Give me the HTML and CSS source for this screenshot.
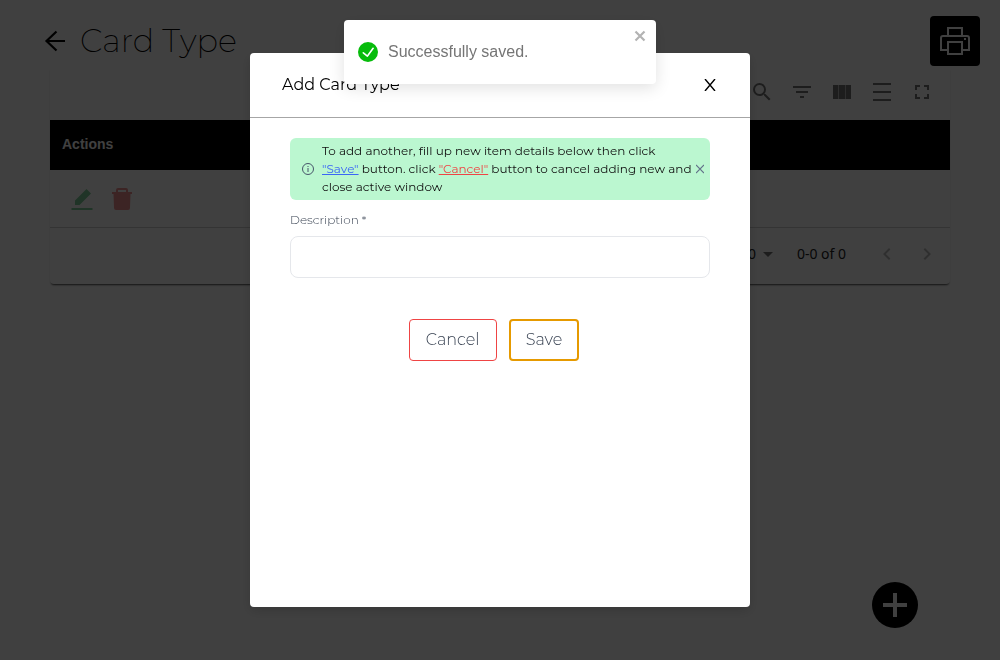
FILE: index.html
```html
<!DOCTYPE html>
<html lang="en">
<head>
<meta charset="utf-8">
<meta name="viewport" content="width=device-width, initial-scale=1">
<title>Card Type</title>
<link rel="stylesheet" href="styles.css">
</head>
<body>
<header class="page-header">
  <button class="icon-btn back-btn" type="button" aria-label="Back">
    <svg width="22" height="22" viewBox="0 0 22 22" fill="none" stroke="currentColor" stroke-width="2.200"><path d="M21 11H2.500M12.500 1.500L2.500 11l10 9.500"/></svg>
  </button>
  <h1 class="page-title">Card Type</h1>
  <button class="icon-btn print-btn" type="button" aria-label="Print">
    <svg width="30" height="30" viewBox="0 0 30 30" fill="none" stroke="currentColor" stroke-width="2"><path d="M8 10V2h14v8M8 24H1V12a2 2 0 0 1 2-2h24a2 2 0 0 1 2 2v12h-7M8 16h14v12H8z"/><path d="M24 13h2" /></svg>
  </button>
</header>

<main class="card">
  <div class="toolbar">
    <button class="icon-btn tool-btn" type="button" aria-label="Search"><svg viewBox="0 0 24 24"><path d="M15.500 14h-.79l-.28-.27A6.471 6.471 0 0 0 16 9.500 6.500 6.500 0 1 0 9.500 16c1.610 0 3.090-.59 4.230-1.570l.27.28v.79l5 4.990L20.490 19l-4.990-5zm-6 0C7.010 14 5 11.990 5 9.500S7.010 5 9.500 5 14 7.010 14 9.500 11.990 14 9.500 14z"/></svg></button>
    <button class="icon-btn tool-btn" type="button" aria-label="Filters"><svg viewBox="0 0 24 24"><path d="M10 18h4v-2h-4v2zM3 6v2h18V6H3zm3 7h12v-2H6v2z"/></svg></button>
    <button class="icon-btn tool-btn" type="button" aria-label="Columns"><svg viewBox="0 0 24 24"><path d="M3 5h5.500v14H3zM9 5h6v14H9zM15.500 5H21v14h-5.500z"/></svg></button>
    <button class="icon-btn tool-btn" type="button" aria-label="Density"><svg viewBox="0 0 24 24"><path d="M3 3h18v2H3zM3 11h18v2H3zM3 19h18v2H3z"/></svg></button>
    <button class="icon-btn tool-btn" type="button" aria-label="Full screen"><svg viewBox="0 0 24 24"><path d="M7 14H5v5h5v-2H7v-3zm-2-4h2V7h3V5H5v5zm12 7h-3v2h5v-5h-2v3zM14 5v2h3v3h2V5h-5z"/></svg></button>
  </div>
  <table class="table">
    <thead><tr><th scope="col">Actions</th></tr></thead>
    <tbody><tr><td>
      <div class="row-actions">
        <button class="icon-btn row-btn edit" type="button" aria-label="Edit"><svg viewBox="0 0 22 22"><path d="M4 12.500L15.500 1 20 5.500 8.500 17H4zM.5 20h21v2H.5z"/></svg></button>
        <button class="icon-btn row-btn delete" type="button" aria-label="Delete"><svg viewBox="0 0 22 22"><path fill-rule="evenodd" d="M5 4V2a2 2 0 0 1 2-2h8a2 2 0 0 1 2 2v2h4v2h-1.500L19 20a2 2 0 0 1-2 2H5a2 2 0 0 1-2-2L2.500 6H1V4zM7 4h8V2H7z"/></svg></button>
      </div>
    </td></tr></tbody>
  </table>
  <div class="pagination">
    <div class="page-size">
      <select class="size-select" aria-label="Rows per page"><option>10</option><option>20</option></select>
      <svg class="caret" width="10" height="5" viewBox="0 0 10 5"><path fill="currentColor" d="M0 0h10L5 5z"/></svg>
    </div>
    <span class="range">0-0 of 0</span>
    <button class="icon-btn tool-btn pager" type="button" aria-label="Previous page" disabled><svg viewBox="0 0 24 24"><path d="M15.410 7.410L14 6l-6 6 6 6 1.410-1.410L10.830 12z"/></svg></button>
    <button class="icon-btn tool-btn pager" type="button" aria-label="Next page" disabled><svg viewBox="0 0 24 24"><path d="M10 6L8.590 7.410 13.170 12l-4.580 4.590L10 18l6-6z"/></svg></button>
  </div>
</main>

<button class="icon-btn fab" type="button" aria-label="Add"><svg width="24" height="24" viewBox="0 0 24 24"><path d="M10 0h4v10h10v4H14v10h-4V14H0v-4h10z"/></svg></button>

<div class="overlay">
  <section class="modal" role="dialog" aria-modal="true" aria-labelledby="modal-title">
    <header class="modal-header">
      <h2 class="modal-title" id="modal-title">Add Card Type</h2>
      <button class="icon-btn modal-close" type="button" aria-label="Close"><svg width="12" height="12" viewBox="0 0 12 12" fill="none" stroke="currentColor" stroke-width="1.400"><path d="M1 0l10 12M11 0L1 12"/></svg></button>
    </header>
    <form class="modal-body">
      <div class="notice">
        <svg class="notice-icon" width="12" height="12" viewBox="0 0 12 12" fill="none" stroke="currentColor"><circle cx="6" cy="6" r="5.500"/><path d="M6 5v4M6 3v1"/></svg>
        <p class="notice-text">To add another, fill up new item details below then click<br><a class="save-link" href="#save">"Save"</a> button. click <a class="cancel-link" href="#cancel">"Cancel"</a> button to cancel adding new and close active window</p>
        <button class="icon-btn notice-close" type="button" aria-label="Dismiss"><svg width="8" height="10" viewBox="0 0 8 10" fill="none" stroke="currentColor" stroke-width="1.200"><path d="M0 1l8 8M8 1L0 9"/></svg></button>
      </div>
      <label class="field-label" for="description">Description *</label>
      <input class="field-input" id="description" type="text" required>
      <div class="form-actions">
        <button class="btn btn-cancel" id="cancel" type="button">Cancel</button>
        <button class="btn btn-save" id="save" type="submit">Save</button>
      </div>
    </form>
  </section>
</div>

<div class="toast" role="alert">
  <svg width="20" height="20" viewBox="0 0 24 24"><path fill="#07bc0c" d="M12 0a12 12 0 1 0 12 12A12.014 12.014 0 0 0 12 0zm6.927 8.200l-6.845 9.289a1.011 1.011 0 0 1-1.430.188l-4.888-3.908a1 1 0 1 1 1.250-1.562l4.076 3.261 6.227-8.451a1 1 0 1 1 1.610 1.183z"/></svg>
  <span class="toast-text">Successfully saved.</span>
  <button class="icon-btn toast-close" type="button" aria-label="Close notification"><svg width="12" height="12" viewBox="0 0 12 12" fill="none" stroke="currentColor" stroke-width="2.200"><path d="M1.500 1.500l9 9M10.500 1.500l-9 9"/></svg></button>
</div>
</body>
</html>
```

FILE: styles.css
```css
* { box-sizing: border-box; }

body {
  margin: 0;
  min-height: 100vh;
  background: #fff;
  color: #000;
  font-family: Montserrat, Inter, sans-serif;
}

h1, h2, p { margin: 0; font-weight: 400; }
svg { display: block; flex: none; }

.icon-btn {
  display: flex;
  align-items: center;
  justify-content: center;
  flex: none;
  padding: 0;
  border: 0;
  background: none;
  color: inherit;
}

.page-header {
  display: flex;
  align-items: center;
  padding: 16px 20px 0 44px;
}
.page-title {
  margin-left: 14px;
  font-size: 32px;
  line-height: 48px;
  font-weight: 200;
}
.print-btn {
  width: 50px;
  height: 50px;
  margin-left: auto;
  border-radius: 4px;
  background: #000;
  color: #fff;
}

.card {
  margin: 0 50px;
  border-radius: 4px;
  box-shadow: 0 2px 2px -1px rgba(0, 0, 0, .7);
}
.toolbar {
  display: flex;
  justify-content: flex-end;
  padding: 6px 8px 8px;
}
.tool-btn {
  width: 40px;
  height: 40px;
  color: #757575;
}
.tool-btn svg { width: 24px; height: 24px; fill: currentColor; }

.table { width: 100%; border-spacing: 0; }
.table th {
  height: 50px;
  padding: 0 12px 2px;
  background: #000;
  color: #fff;
  text-align: left;
  font: bold 14px/20px "Liberation Sans", Arial, sans-serif;
}
.table td {
  height: 58px;
  padding: 0 12px;
  border-bottom: 1px solid #d0d0d0;
}
.row-actions { display: flex; }
.row-btn { width: 40px; height: 40px; }
.row-btn svg { width: 22px; height: 22px; fill: currentColor; }
.edit { color: #80ce9a; }
.delete { color: #ef9090; }

.pagination {
  display: flex;
  align-items: center;
  justify-content: flex-end;
  padding: 6px 3px 10px;
  font: 14px/20px "Noto Sans", sans-serif;
  color: #212121;
}
.page-size { display: flex; align-items: center; gap: 6px; margin-right: 24px; }
.size-select {
  appearance: none;
  padding: 0;
  border: 0;
  background: none;
  color: inherit;
  font: inherit;
}
.caret { color: #757575; }
.range { margin-right: 21px; }
.pager { color: #bdbdbd; }

.fab {
  position: fixed;
  right: 82px;
  bottom: 32px;
  width: 46px;
  height: 46px;
  border-radius: 50%;
  background: #000;
  color: #fff;
}
.fab svg { fill: currentColor; }

.overlay {
  position: fixed;
  inset: 0;
  display: flex;
  align-items: center;
  justify-content: center;
  background: rgba(0, 0, 0, .75);
}
.modal {
  width: 500px;
  max-width: 100%;
  height: 84vh;
  overflow: auto;
  border-radius: 4px;
  background: #fff;
  box-shadow: 0 4px 12px rgba(0, 0, 0, .15);
}
.modal-header {
  display: flex;
  align-items: center;
  justify-content: space-between;
  padding: 20px 32px;
  border-bottom: 1px solid #a6a6a6;
}
.modal-title { font-size: 16px; line-height: 24px; }
.modal-close { width: 16px; height: 24px; }

.modal-body { padding: 20px 40px; }
.notice {
  display: flex;
  align-items: center;
  padding: 4px 6px 4px 12px;
  border-radius: 6px;
  background: #bbf7d0;
}
.notice-icon { margin-right: 8px; color: #475569; }
.notice-text { flex: 1; font-size: 12px; line-height: 18px; color: #111; }
.notice-close { color: #64748b; }
.save-link { color: #3b66f5; }
.cancel-link { color: #ef4444; }

.field-label {
  display: block;
  margin-top: 10px;
  font-size: 12px;
  line-height: 20px;
  font-weight: 300;
  color: #374151;
}
.field-input {
  display: block;
  width: 100%;
  height: 42px;
  margin-top: 6px;
  padding: 0 12px;
  border: 1px solid #e5e7eb;
  border-radius: 8px;
  background: #fff;
  font: inherit;
}
.form-actions {
  display: flex;
  justify-content: center;
  gap: 12px;
  margin-top: 41px;
  padding-right: 12px;
}
.btn {
  height: 42px;
  padding: 0 15px;
  border-radius: 4px;
  background: #fff;
  color: #374151;
  font: 300 16px/24px Montserrat, Inter, sans-serif;
}
.btn-cancel { min-width: 88px; border: 1px solid #ef4444; }
.btn-save { min-width: 70px; border: 2px solid #e69a00; }

.toast {
  position: fixed;
  top: 20px;
  left: 50%;
  transform: translateX(-50%);
  display: flex;
  align-items: center;
  gap: 10px;
  width: 312px;
  min-height: 64px;
  padding: 8px 10px 8px 14px;
  border-radius: 4px;
  background: #fff;
  color: #757575;
  box-shadow: 0 4px 16px rgba(0, 0, 0, .12);
  font: 16px/24px "Liberation Sans", Arial, sans-serif;
}
.toast-text { flex: 1; }
.toast-close { align-self: flex-start; width: 12px; height: 16px; color: #b3b3b3; }
```
